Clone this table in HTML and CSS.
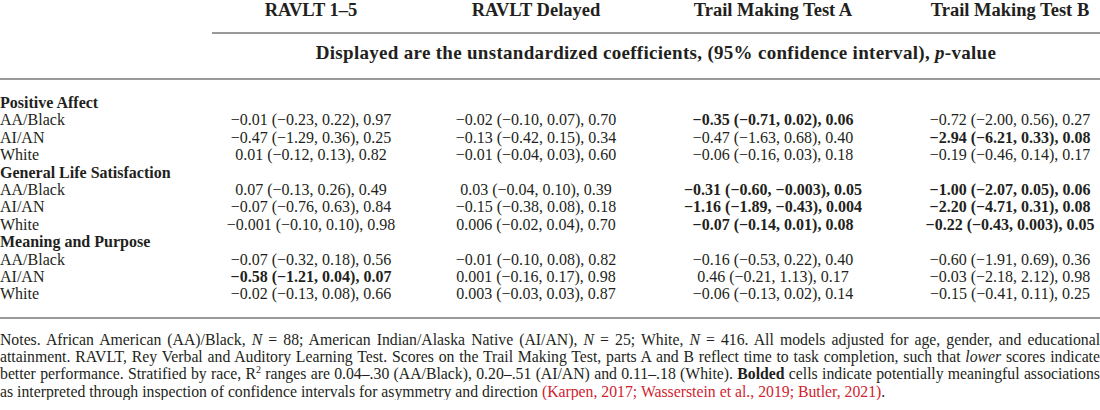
FILE: index.html
```html
<!DOCTYPE html>
<html lang="en">
<head>
    <meta charset="UTF-8">
    <meta name="viewport" content="width=device-width, initial-scale=1.0">
    <title>Wellbeing and Cognition by Race</title>
    <link rel="stylesheet" href="styles.css">
</head>
<body>
    <table class="results">
        <colgroup>
            <col class="col-label">
            <col class="col-ravlt">
            <col class="col-delayed">
            <col class="col-tmta">
            <col class="col-tmtb">
        </colgroup>
        <thead>
            <tr class="col-heads">
                <th class="blank"></th>
                <th>RAVLT 1–5</th>
                <th>RAVLT Delayed</th>
                <th>Trail Making Test A</th>
                <th class="last">Trail Making Test B</th>
            </tr>
            <tr class="subhead">
                <th class="blank"></th>
                <th colspan="4">Displayed are the unstandardized coefficients, (95% confidence interval), <i>p</i>-value</th>
            </tr>
        </thead>
        <tbody>
            <tr class="group first">
                <td colspan="5">Positive Affect</td>
            </tr>
            <tr>
                <td class="label">AA/Black</td>
                <td>−0.01 (−0.23, 0.22), 0.97</td>
                <td>−0.02 (−0.10, 0.07), 0.70</td>
                <td class="sig">−0.35 (−0.71, 0.02), 0.06</td>
                <td class="last">−0.72 (−2.00, 0.56), 0.27</td>
            </tr>
            <tr>
                <td class="label">AI/AN</td>
                <td>−0.47 (−1.29, 0.36), 0.25</td>
                <td>−0.13 (−0.42, 0.15), 0.34</td>
                <td>−0.47 (−1.63, 0.68), 0.40</td>
                <td class="last sig">−2.94 (−6.21, 0.33), 0.08</td>
            </tr>
            <tr>
                <td class="label">White</td>
                <td>0.01 (−0.12, 0.13), 0.82</td>
                <td>−0.01 (−0.04, 0.03), 0.60</td>
                <td>−0.06 (−0.16, 0.03), 0.18</td>
                <td class="last">−0.19 (−0.46, 0.14), 0.17</td>
            </tr>
            <tr class="group">
                <td colspan="5">General Life Satisfaction</td>
            </tr>
            <tr>
                <td class="label">AA/Black</td>
                <td>0.07 (−0.13, 0.26), 0.49</td>
                <td>0.03 (−0.04, 0.10), 0.39</td>
                <td class="sig">−0.31 (−0.60, −0.003), 0.05</td>
                <td class="last sig">−1.00 (−2.07, 0.05), 0.06</td>
            </tr>
            <tr>
                <td class="label">AI/AN</td>
                <td>−0.07 (−0.76, 0.63), 0.84</td>
                <td>−0.15 (−0.38, 0.08), 0.18</td>
                <td class="sig">−1.16 (−1.89, −0.43), 0.004</td>
                <td class="last sig">−2.20 (−4.71, 0.31), 0.08</td>
            </tr>
            <tr>
                <td class="label">White</td>
                <td>−0.001 (−0.10, 0.10), 0.98</td>
                <td>0.006 (−0.02, 0.04), 0.70</td>
                <td class="sig">−0.07 (−0.14, 0.01), 0.08</td>
                <td class="last sig">−0.22 (−0.43, 0.003), 0.05</td>
            </tr>
            <tr class="group">
                <td colspan="5">Meaning and Purpose</td>
            </tr>
            <tr>
                <td class="label">AA/Black</td>
                <td>−0.07 (−0.32, 0.18), 0.56</td>
                <td>−0.01 (−0.10, 0.08), 0.82</td>
                <td>−0.16 (−0.53, 0.22), 0.40</td>
                <td class="last">−0.60 (−1.91, 0.69), 0.36</td>
            </tr>
            <tr>
                <td class="label">AI/AN</td>
                <td class="sig">−0.58 (−1.21, 0.04), 0.07</td>
                <td>0.001 (−0.16, 0.17), 0.98</td>
                <td>0.46 (−0.21, 1.13), 0.17</td>
                <td class="last">−0.03 (−2.18, 2.12), 0.98</td>
            </tr>
            <tr class="final">
                <td class="label">White</td>
                <td>−0.02 (−0.13, 0.08), 0.66</td>
                <td>0.003 (−0.03, 0.03), 0.87</td>
                <td>−0.06 (−0.13, 0.02), 0.14</td>
                <td class="last">−0.15 (−0.41, 0.11), 0.25</td>
            </tr>
        </tbody>
    </table>

    <p class="notes">Notes. African American (AA)/Black, <i>N</i> = 88; American Indian/Alaska Native (AI/AN), <i>N</i> = 25; White, <i>N</i> = 416. All models adjusted for age, gender, and educational attainment. RAVLT, Rey Verbal and Auditory Learning Test. Scores on the Trail Making Test, parts A and B reflect time to task completion, such that <i>lower</i> scores indicate better performance. Stratified by race, R<sup>2</sup> ranges are 0.04–.30 (AA/Black), 0.20–.51 (AI/AN) and 0.11–.18 (White). <b>Bolded</b> cells indicate potentially meaningful associations as interpreted through inspection of confidence intervals for asymmetry and direction <span class="cite">(Karpen, 2017; Wasserstein et al., 2019; Butler, 2021)</span>.</p>
</body>
</html>
```

FILE: styles.css
```css
body {
    margin: 0;
    background: #ffffff;
    color: #231f20;
    font-family: "Liberation Serif", "Times New Roman", serif;
}
.results {
    width: 1100px;
    table-layout: fixed;
    border-collapse: collapse;
    border-spacing: 0;
}
.col-label {
    width: 212px;
}
.col-ravlt {
    width: 198px;
}
.col-delayed {
    width: 252px;
}
.col-tmta {
    width: 222px;
}
.col-tmtb {
    width: 216px;
}
th, td {
    padding: 0;
    white-space: nowrap;
    text-align: center;
}
th {
    font-size: 18.5px;
    font-weight: bold;
    line-height: 20px;
}
.col-heads th {
    height: 32px;
    vertical-align: top;
    border-bottom: 2px solid #9a9a9a;
}
.col-heads th.blank {
    border-bottom: none;
}
.subhead th {
    padding-top: 9px;
    padding-bottom: 15px;
    font-size: 19px;
    letter-spacing: 0.3px;
    border-bottom: 2px solid #9a9a9a;
}
td {
    font-size: 16px;
    line-height: 17.4px;
}
td.label {
    text-align: left;
}
td.last, th.last {
    padding-left: 36px;
}
.sig {
    font-weight: bold;
}
.group td {
    text-align: left;
    font-weight: bold;
}
.group.first td {
    padding-top: 14px;
}
.final td {
    padding-bottom: 14px;
    border-bottom: 2px solid #9a9a9a;
}
.notes {
    margin: 12px 0 0;
    font-size: 15.75px;
    line-height: 17.3px;
    text-align: justify;
}
.notes sup {
    font-size: 10px;
    line-height: 0;
}
.cite {
    color: #d0232f;
}
```
